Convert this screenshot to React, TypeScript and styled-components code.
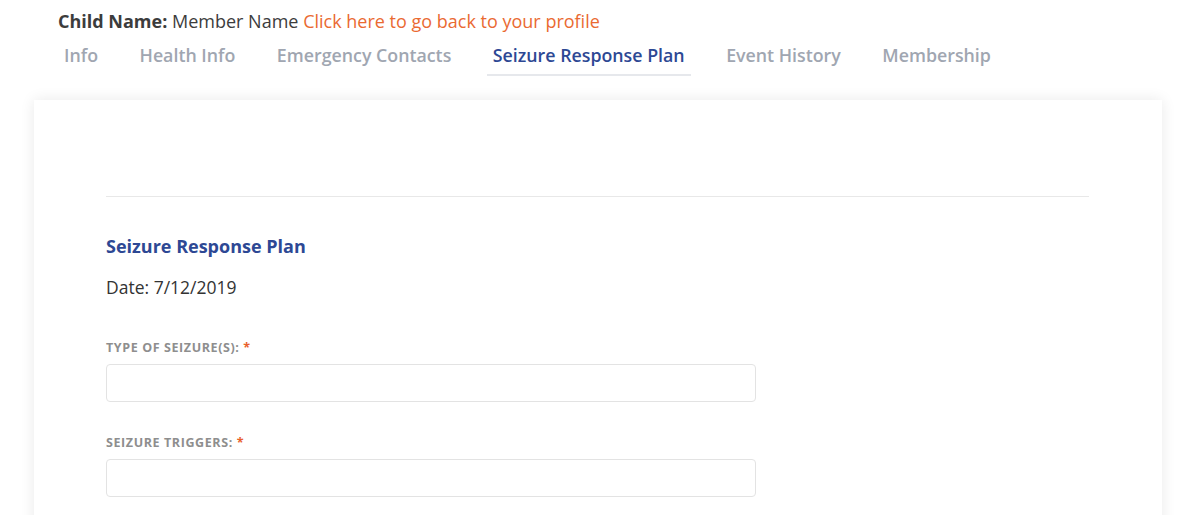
import styled, { createGlobalStyle } from "styled-components";

const GlobalStyle = createGlobalStyle`
  body {
    margin: 0;
    background: #fff;
    font-family: "Open Sans", Lato, Arial, sans-serif;
    color: #333;
  }
`;

const tabs = [
  "Info",
  "Health Info",
  "Emergency Contacts",
  "Seizure Response Plan",
  "Event History",
  "Membership",
];

const App = () => {
  return (
    <Page>
      <GlobalStyle />
      <Header>
        <ChildLine>
          <strong>Child Name:</strong> Member Name{" "}
          <BackLink href="#">Click here to go back to your profile</BackLink>
        </ChildLine>
        <TabBar>
          {tabs.map((t) => (
            <Tab key={t} $active={t === "Seizure Response Plan"}>
              {t}
            </Tab>
          ))}
        </TabBar>
      </Header>
      <Card>
        <Divider />
        <Title>Seizure Response Plan</Title>
        <DateLine>Date: 7/12/2019</DateLine>
        <Field>
          <Label>
            Type of Seizure(s): <Req>*</Req>
          </Label>
          <Input type="text" />
        </Field>
        <Field>
          <Label>
            Seizure Triggers: <Req>*</Req>
          </Label>
          <Input type="text" />
        </Field>
      </Card>
    </Page>
  );
};

export default App;

const Page = styled.div`
  width: 1193px;
  height: 515px;
  overflow: hidden;
`;

const Header = styled.div`
  padding: 10px 0 0 58px;
`;

const ChildLine = styled.div`
  font-size: 18px;
  line-height: 22px;
  color: #3c3c3c;
  strong {
    font-weight: 700;
  }
`;

const BackLink = styled.a`
  color: #ea6a32;
  text-decoration: none;
`;

const TabBar = styled.div`
  display: flex;
  gap: 29.5px;
  margin-top: 12px;
`;

const Tab = styled.div<{ $active?: boolean }>`
  padding: 0 6px 8px;
  font-size: 17.8px;
  line-height: 22px;
  font-weight: 600;
  color: ${(p) => (p.$active ? "#2d4894" : "#a0a6b1")};
  border-bottom: 2px solid ${(p) => (p.$active ? "#e6e8ec" : "transparent")};
`;

const Card = styled.div`
  margin: 24px 0 0 34px;
  width: 1128px;
  min-height: 500px;
  box-sizing: border-box;
  padding: 96px 73px 0 72px;
  background: #fff;
  box-shadow: 0 0 14px rgba(0, 0, 0, 0.09);
`;

const Divider = styled.hr`
  border: none;
  border-top: 1px solid #e8e8e8;
  margin: 0;
`;

const Title = styled.h2`
  margin: 38px 0 0;
  font-size: 18px;
  line-height: 22px;
  font-weight: 700;
  color: #2d4894;
`;

const DateLine = styled.p`
  margin: 19px 0 0;
  font-size: 17.5px;
  line-height: 22px;
  color: #333;
`;

const Field = styled.div`
  margin-top: 43px;
  & + & {
    margin-top: 34px;
  }
`;

const Label = styled.label`
  display: block;
  font-size: 12.5px;
  line-height: 14px;
  font-weight: 700;
  text-transform: uppercase;
  letter-spacing: 0.6px;
  color: #8e8e8e;
  margin-bottom: 9px;
`;

const Req = styled.span`
  color: #e8602c;
`;

const Input = styled.input`
  display: block;
  width: 650px;
  height: 38px;
  box-sizing: border-box;
  border: 1px solid #e3e3e3;
  border-radius: 4px;
  background: #fff;
  outline: none;
`;
